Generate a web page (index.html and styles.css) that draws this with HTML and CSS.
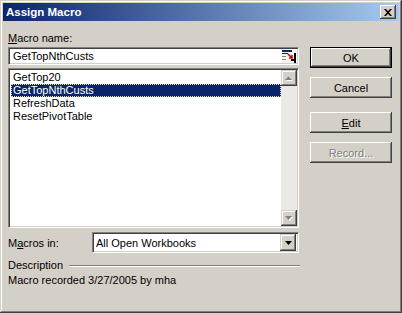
FILE: index.html
```html
<!DOCTYPE html>
<html lang="en">
<head>
  <meta charset="UTF-8" />
  <title>Assign Macro</title>
  <link rel="stylesheet" href="styles.css">
</head>
<body>
  <div class="window">
    <div class="titlebar">
      <span class="title">Assign Macro</span>
      <span class="close-btn">
        <svg width="8" height="7" viewBox="0 0 8 7"><path d="M0 0h2l2 2.2L6 0h2L5 3.5 8 7H6L4 4.8 2 7H0l3-3.5z" fill="#000"/></svg>
      </span>
    </div>

    <div class="body">
      <div class="main-col">
        <div class="field-label"><u>M</u>acro name:</div>
        <div class="name-input">
          <span class="name-value">GetTopNthCusts</span>
          <span class="ref-btn">
            <svg width="14" height="13" viewBox="0 0 14 13">
              <rect x="0" y="0" width="14" height="13" fill="#f4f3f0"/>
              <rect x="0" y="0" width="10" height="2" fill="#0a246a"/>
              <rect x="0" y="3" width="6" height="1" fill="#0a246a"/>
              <rect x="0" y="6" width="4" height="1" fill="#808080"/>
              <rect x="0" y="9" width="4" height="1" fill="#808080"/>
              <path d="M6 4l4 4M10 5v3H7" stroke="#e00000" stroke-width="1.6" fill="none"/>
              <path d="M9 10h5M13 3v10" stroke="#000" stroke-width="2"/>
            </svg>
          </span>
        </div>

        <div class="macro-list">
          <ul class="items">
            <li>GetTop20</li>
            <li class="selected">GetTopNthCusts</li>
            <li>RefreshData</li>
            <li>ResetPivotTable</li>
          </ul>
          <div class="scrollbar">
            <span class="scroll-btn">
              <svg width="8" height="5" viewBox="0 0 8 5"><path d="M4.5 1.5L8 5H1z" fill="#fff"/><path d="M3.5 0.5L7 4H0z" fill="#808080"/></svg>
            </span>
            <span class="scroll-track"></span>
            <span class="scroll-btn">
              <svg width="8" height="5" viewBox="0 0 8 5"><path d="M1 1h7L4.5 5z" fill="#fff"/><path d="M0 0h7L3.5 4z" fill="#808080"/></svg>
            </span>
          </div>
        </div>

        <div class="macros-in">
          <span class="macros-in-label">M<u>a</u>cros in:</span>
          <div class="combo">
            <span class="combo-value">All Open Workbooks</span>
            <span class="combo-btn">
              <svg width="7" height="4" viewBox="0 0 7 4"><path d="M0 0h7L3.5 4z" fill="#000"/></svg>
            </span>
          </div>
        </div>

        <div class="desc-head">
          <span>Description</span>
          <span class="rule"></span>
        </div>
        <div class="desc-text">Macro recorded 3/27/2005 by mha</div>
      </div>

      <div class="side-col">
        <button class="btn default">OK</button>
        <button class="btn">Cancel</button>
        <button class="btn spaced"><u>E</u>dit</button>
        <button class="btn" disabled>Record...</button>
      </div>
    </div>
  </div>
</body>
</html>
```

FILE: styles.css
```css
* {
  margin: 0;
  padding: 0;
  box-sizing: border-box;
}
html, body {
  width: 100%;
  height: 100%;
  overflow: hidden;
  background: #d4d0c8;
  font-family: "Liberation Sans", Arial, sans-serif;
  font-size: 11px;
  color: #000;
}

.window {
  width: 402px;
  height: 313px;
  padding: 3px;
  background: #d4d0c8;
  box-shadow: inset -1px -1px #404040, inset 1px 1px #d4d0c8,
              inset -2px -2px #808080, inset 2px 2px #fff;
}

.titlebar {
  height: 18px;
  display: flex;
  align-items: center;
  justify-content: space-between;
  padding: 0 3px 0 3px;
  background: linear-gradient(to right, #0a246a, #a6caf0);
}
.title {
  color: #fff;
  font-weight: bold;
  font-size: 11.5px;
}
.close-btn {
  width: 16px;
  height: 14px;
  display: flex;
  align-items: center;
  justify-content: center;
  background: #d4d0c8;
  box-shadow: inset -1px -1px #404040, inset 1px 1px #fff,
              inset -2px -2px #808080, inset 2px 2px #d4d0c8;
}

.body {
  display: flex;
  gap: 11px;
  padding: 0 7px 0 5px;
}

.main-col {
  width: 291px;
  padding-top: 11px;
  display: flex;
  flex-direction: column;
}
.field-label {
  height: 13px;
  line-height: 13px;
  margin-bottom: 2px;
}

/* sunken boxes */
.name-input, .macro-list, .combo {
  background: #fff;
  border: 1px solid;
  border-color: #808080 #fff #fff #808080;
  box-shadow: inset 1px 1px #404040, inset -1px -1px #d4d0c8;
}

.name-input {
  height: 18px;
  display: flex;
  align-items: center;
  justify-content: space-between;
  padding: 0 2px 0 4px;
}
.ref-btn {
  display: flex;
  width: 14px;
  height: 13px;
}

.macro-list {
  height: 160px;
  margin-top: 3px;
  display: flex;
  padding: 2px 1px 1px 2px;
}
.items {
  list-style: none;
  flex: 1;
}
.items li {
  height: 13px;
  line-height: 13px;
  padding-left: 2px;
}
.items li.selected {
  background: #0a246a;
  color: #fff;
  outline: 1px dotted #e8e0a0;
  outline-offset: -1px;
}

.scrollbar {
  width: 16px;
  display: flex;
  flex-direction: column;
  margin: -1px 0 0 0;
}
.scroll-btn {
  height: 16px;
  display: flex;
  align-items: center;
  justify-content: center;
  background: #d4d0c8;
  box-shadow: inset -1px -1px #404040, inset 1px 1px #d4d0c8,
              inset -2px -2px #808080, inset 2px 2px #fff;
}
.scroll-track {
  flex: 1;
  background: #ebe9e5;
}

.macros-in {
  height: 21px;
  margin-top: 4px;
  display: flex;
  align-items: center;
}
.macros-in-label {
  width: 84px;
}
.combo {
  flex: 1;
  height: 21px;
  display: flex;
  align-items: center;
  justify-content: space-between;
  padding: 0 2px 0 3px;
}
.combo-btn {
  width: 16px;
  height: 17px;
  display: flex;
  align-items: center;
  justify-content: center;
  background: #d4d0c8;
  box-shadow: inset -1px -1px #404040, inset 1px 1px #d4d0c8,
              inset -2px -2px #808080, inset 2px 2px #fff;
}

.desc-head {
  height: 13px;
  line-height: 13px;
  margin-top: 6px;
  display: flex;
  align-items: center;
  gap: 6px;
}
.rule {
  flex: 1;
  height: 2px;
  border-top: 1px solid #808080;
  border-bottom: 1px solid #fff;
  margin-right: -1px;
}
.desc-text {
  height: 13px;
  line-height: 13px;
  margin-top: 2px;
}

.side-col {
  width: 82px;
  padding-top: 26px;
  display: flex;
  flex-direction: column;
  gap: 9px;
}
.btn {
  height: 21px;
  font-family: inherit;
  font-size: 11px;
  background: #d4d0c8;
  border: none;
  box-shadow: inset -1px -1px #404040, inset 1px 1px #fff,
              inset -2px -2px #808080, inset 2px 2px #d4d0c8;
}
.btn.default {
  border: 1px solid #000;
}
.btn.spaced {
  margin-top: 5px;
}
.btn:disabled {
  color: #808080;
  text-shadow: 1px 1px #fff;
}
```
